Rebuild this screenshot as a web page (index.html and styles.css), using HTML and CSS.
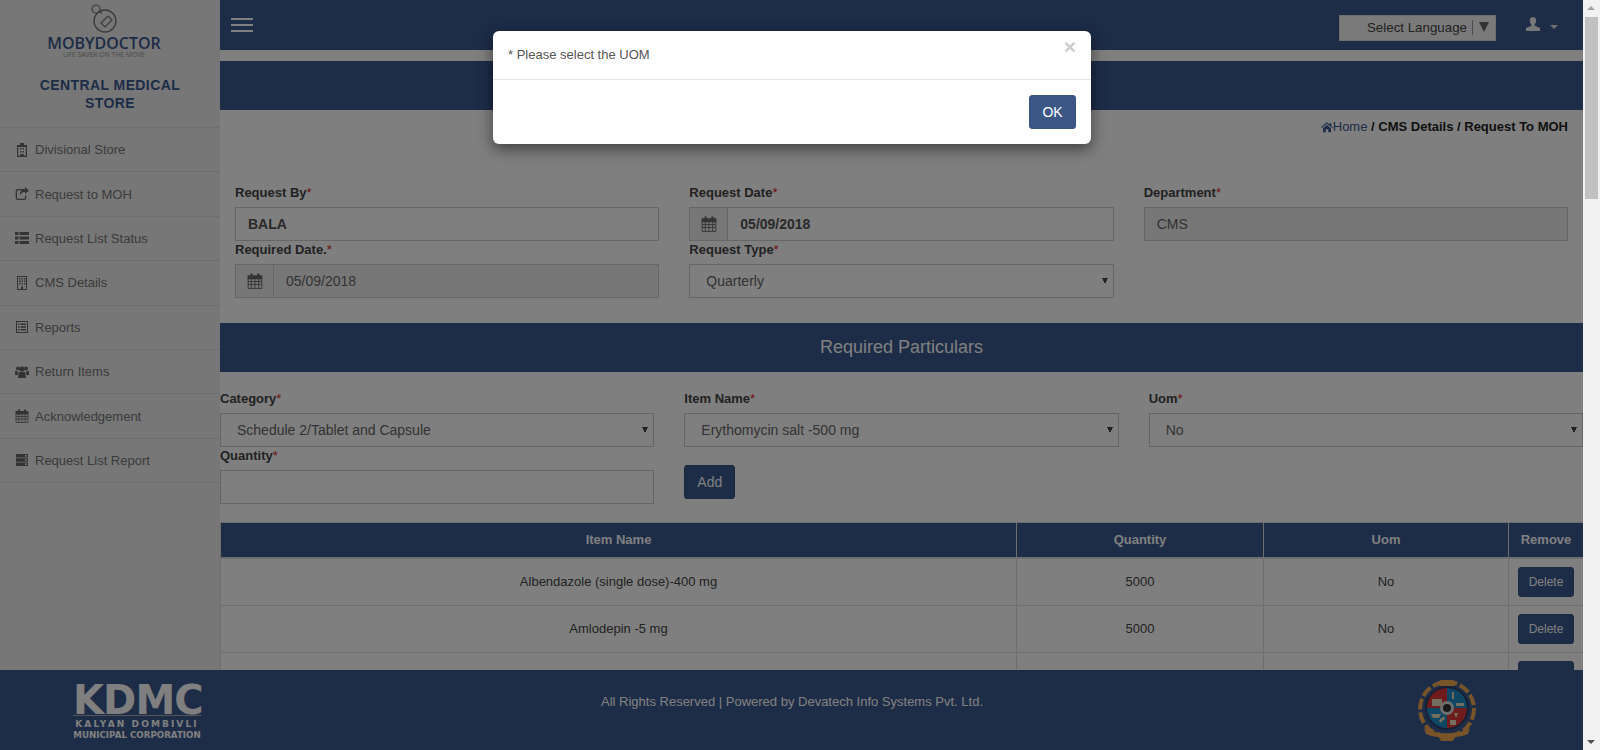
FILE: index.html
```html
<!DOCTYPE html>
<html lang="en">
<head>
    <meta charset="UTF-8">
    <title>Request To MOH</title>
    <link rel="stylesheet" href="styles.css">
</head>
<body>
    <svg class="sprite" width="0" height="0">
        <symbol id="i-cal" viewBox="0 0 14 14"><path d="M3 .500h2V3H3zM9 .500h2V3H9zM.500 2h13v3.500H.500z"/><path d="M1 5v8.500h12V5M1 7.500h12M1 10h12M3.800 5v8.500M7 5v8.500M10.200 5v8.500" fill="none" stroke="currentColor" stroke-width=".8"/></symbol>
        <symbol id="i-hosp" viewBox="0 0 14 14"><path d="M5 0h4v2h3v12H2V2h3zM3.200 4v8.800h2V11h3.600v1.800h2V4zM5 5h1.500v1.500H5zm2.500 0H9v1.500H7.500zM5 8h1.500v1.500H5zm2.500 0H9v1.500H7.500z" fill-rule="evenodd"/></symbol>
        <symbol id="i-share" viewBox="0 0 14 14"><path d="M3 2h6v1.300H3a1 1 0 0 0-1 1v6.400a1 1 0 0 0 1 1h6a1 1 0 0 0 1-1V9l1.300-1v3a2 2 0 0 1-2 2H2.700a2 2 0 0 1-2-2V4a2 2 0 0 1 2-2zM10 0l4 3.500L10 7V5C7 5 5.500 6 5 9 4.500 5 6 2.500 10 2z"/></symbol>
        <symbol id="i-list" viewBox="0 0 14 14"><path d="M0 1h3.500v3H0zm4.500 0H14v3H4.500zM0 5.500h3.500v3H0zm4.500 0H14v3H4.500zM0 10h3.500v3H0zm4.500 0H14v3H4.500z"/></symbol>
        <symbol id="i-build" viewBox="0 0 14 14"><path d="M2 0h10v14H2zm1 1v12h3v-2.500h2V13h3V1zm1 1h1.500v1.500H4zm2.500 0H8v1.500H6.500zM9 2h1.500v1.500H9zM4 4.500h1.500V6H4zm2.500 0H8V6H6.500zm2.500 0h1.500V6H9zM4 7h1.500v1.500H4zm2.500 0H8v1.500H6.500zM9 7h1.500v1.500H9z" fill-rule="evenodd"/></symbol>
        <symbol id="i-report" viewBox="0 0 14 14"><path d="M1 1h12v12H1zm1 1v10h10V2zm1 1.500h1.500V5H3zm2.500 0H11V5H5.500zM3 6.200h1.500v1.500H3zm2.500 0H11v1.500H5.500zM3 9h1.500v1.500H3zm2.500 0H11v1.500H5.500z" fill-rule="evenodd"/></symbol>
        <symbol id="i-users" viewBox="0 0 14 14"><circle cx="3" cy="3.500" r="1.900"/><circle cx="11" cy="3.500" r="1.900"/><circle cx="7" cy="4" r="2.600"/><path d="M0 6h2.500L3 10H0zm14 0h-2.500L11 10h3zM3.800 7h6.400l.8 6H3z"/></symbol>
        <symbol id="i-server" viewBox="0 0 14 14"><path d="M1 1h12v3.500H1zm0 4.200h12v3.600H1zm0 4.300h12V13H1zM10 2v1.500h2V2zm0 4.300v1.500h2V6.300zm0 4.200V12h2v-1.500z" fill-rule="evenodd"/></symbol>
        <symbol id="i-home" viewBox="0 0 14 14"><path d="M7 1.500l3 2.500V2.500h2v3.200L14 7.400l-.8.900L7 3.200.8 8.300 0 7.400zM2.300 8.500L7 4.700l4.700 3.800V13H8.500V9.700h-3V13H2.300z"/></symbol>
        <symbol id="i-user" viewBox="0 0 14 14"><path d="M7 0c2 0 3.200 1.500 3.200 3.500 0 1.500-.6 3-1.500 3.800v1.400L14 11v3H0v-3l5.300-2.300V7.300C4.400 6.500 3.800 5 3.800 3.500 3.800 1.500 5 0 7 0z"/></symbol>
    </svg>

    <div class="page">
        <div class="app">
            <aside class="sidebar">
                <div class="brand">
                    <svg class="brand-mark" viewBox="0 0 28 30" width="28" height="30">
                        <circle cx="15" cy="18" r="11" fill="none" stroke="#777" stroke-width="1.300"/>
                        <circle cx="6" cy="6" r="4" fill="none" stroke="#777" stroke-width="1.200"/>
                        <path d="M9.500 8.500c1 1 1.500 1.500 2.500 2" fill="none" stroke="#777" stroke-width="1.200"/>
                        <path d="M11 20l7-7 4 4-7 7z" fill="none" stroke="#777" stroke-width="1.200"/>
                    </svg>
                    <div class="brand-name">MOBYDOCTOR</div>
                    <div class="brand-tag">LIFE SAVER ON THE MOVE</div>
                </div>
                <div class="store-name">CENTRAL MEDICAL<br>STORE</div>
                <ul class="side-menu">
                    <li><svg class="icon"><use href="#i-hosp"/></svg>Divisional Store</li>
                    <li><svg class="icon"><use href="#i-share"/></svg>Request to MOH</li>
                    <li><svg class="icon"><use href="#i-list"/></svg>Request List Status</li>
                    <li><svg class="icon"><use href="#i-build"/></svg>CMS Details</li>
                    <li><svg class="icon"><use href="#i-report"/></svg>Reports</li>
                    <li><svg class="icon"><use href="#i-users"/></svg>Return Items</li>
                    <li><svg class="icon"><use href="#i-cal"/></svg>Acknowledgement</li>
                    <li><svg class="icon"><use href="#i-server"/></svg>Request List Report</li>
                </ul>
            </aside>

            <main class="main">
                <header class="topbar">
                    <div class="burger"><span></span><span></span><span></span></div>
                    <div class="topbar-right">
                        <div class="lang">
                            <span>Select Language</span>
                            <i class="lang-sep"></i>
                            <b class="lang-arrow"></b>
                        </div>
                        <div class="user">
                            <svg class="user-icon"><use href="#i-user"/></svg>
                            <b class="caret"></b>
                        </div>
                    </div>
                </header>

                <div class="band band-top"></div>

                <div class="crumbs">
                    <svg class="home-icon"><use href="#i-home"/></svg><a href="#">Home</a> / CMS Details / Request To MOH
                </div>

                <form class="form-top">
                    <div class="field">
                        <label>Request By<em>*</em></label>
                        <input class="control strong" type="text" value="BALA">
                    </div>
                    <div class="field">
                        <label>Request Date<em>*</em></label>
                        <div class="input-group">
                            <span class="addon"><svg class="icon-cal"><use href="#i-cal"/></svg></span>
                            <input class="control strong" type="text" value="05/09/2018">
                        </div>
                    </div>
                    <div class="field">
                        <label>Department<em>*</em></label>
                        <input class="control" type="text" value="CMS" disabled>
                    </div>
                    <div class="field">
                        <label>Required Date.<em>*</em></label>
                        <div class="input-group">
                            <span class="addon"><svg class="icon-cal"><use href="#i-cal"/></svg></span>
                            <input class="control" type="text" value="05/09/2018" disabled>
                        </div>
                    </div>
                    <div class="field">
                        <label>Request Type<em>*</em></label>
                        <select class="control"><option>Quarterly</option></select>
                    </div>
                </form>

                <div class="band band-title">Required Particulars</div>

                <form class="form-items">
                    <div class="field">
                        <label>Category<em>*</em></label>
                        <select class="control"><option>Schedule 2/Tablet and Capsule</option></select>
                    </div>
                    <div class="field">
                        <label>Item Name<em>*</em></label>
                        <select class="control"><option>Erythomycin salt -500 mg</option></select>
                    </div>
                    <div class="field">
                        <label>Uom<em>*</em></label>
                        <select class="control"><option>No</option></select>
                    </div>
                    <div class="field">
                        <label>Quantity<em>*</em></label>
                        <input class="control" type="text">
                    </div>
                    <div class="field field-btn">
                        <button class="btn" type="button">Add</button>
                    </div>
                </form>

                <table class="items">
                    <colgroup>
                        <col class="col-name"><col class="col-qty"><col class="col-uom"><col class="col-del">
                    </colgroup>
                    <thead>
                        <tr><th>Item Name</th><th>Quantity</th><th>Uom</th><th>Remove</th></tr>
                    </thead>
                    <tbody>
                        <tr>
                            <td>Albendazole (single dose)-400 mg</td><td>5000</td><td>No</td>
                            <td><button class="btn btn-sm" type="button">Delete</button></td>
                        </tr>
                        <tr>
                            <td>Amlodepin -5 mg</td><td>5000</td><td>No</td>
                            <td><button class="btn btn-sm" type="button">Delete</button></td>
                        </tr>
                        <tr>
                            <td>Atenolol -50 mg</td><td>5000</td><td>No</td>
                            <td><button class="btn btn-sm" type="button">Delete</button></td>
                        </tr>
                    </tbody>
                </table>
            </main>

            <footer class="footer">
                <div class="kdmc">
                    <div class="kdmc-big">KDMC</div>
                    <div class="kdmc-line">KALYAN DOMBIVLI</div>
                    <div class="kdmc-sub">MUNICIPAL CORPORATION</div>
                </div>
                <div class="footer-text">All Rights Reserved | Powered by Devatech Info Systems Pvt. Ltd.</div>
                <svg class="emblem" viewBox="0 0 62 64" width="62" height="64">
                    <circle cx="31" cy="30" r="27" fill="none" stroke="#f0a850" stroke-width="4" stroke-dasharray="11 3"/>
                    <path d="M21 3l4-2h12l4 2-3 4H24z" fill="#f0a850"/>
                    <path d="M8 49c12 7 34 7 46 0l-2 6c-12 5-30 5-42 0zM22 57h18l-3 5H25z" fill="#f0a850"/>
                    <circle cx="31" cy="29" r="22" fill="#2a3f66"/>
                    <path d="M31 9a20 20 0 0 0-20 20h20z" fill="#e03636"/>
                    <path d="M31 9a20 20 0 0 1 20 20H31z" fill="#1c8cc8"/>
                    <path d="M11 29a20 20 0 0 0 20 20V29z" fill="#1c8cc8"/>
                    <path d="M51 29a20 20 0 0 1-20 20V29z" fill="#e03636"/>
                    <path d="M16 20h10v7H16zM36 13h2v7h-2zM40 24h8v3h-8zM38 34h4l-2 5zM15 35h10l-2 4h-6zM34 41h6v5h-6zM23 41l5-4 1 3-5 4z" fill="#e8dcc0"/>
                    <circle cx="31" cy="29" r="7" fill="#ddd"/>
                    <circle cx="31" cy="29" r="4" fill="#333"/>
                </svg>
            </footer>

            <div class="backdrop"></div>

            <div class="modal">
                <div class="modal-head">
                    <span class="modal-msg">* Please select the UOM</span>
                    <span class="modal-close">&times;</span>
                </div>
                <div class="modal-foot">
                    <button class="btn btn-ok" type="button">OK</button>
                </div>
            </div>
        </div>

        <div class="scrollbar">
            <b class="arrow-up"></b>
            <div class="thumb"></div>
            <b class="arrow-down"></b>
        </div>
    </div>
</body>
</html>
```

FILE: styles.css
```css
* {
    box-sizing: border-box;
}
html, body {
    margin: 0;
    padding: 0;
    height: 100%;
    overflow: hidden;
}
body {
    font-family: "Liberation Sans", Arial, sans-serif;
    font-size: 13px;
    color: #444;
    background: #fff;
}
.sprite {
    position: absolute;
}
.page {
    display: flex;
    height: 750px;
}
.app {
    position: relative;
    display: flex;
    flex: 1;
    min-width: 0;
    overflow: hidden;
}

/* sidebar */
.sidebar {
    flex: 0 0 220px;
    background: #eee;
}
.brand {
    display: flex;
    flex-direction: column;
    align-items: center;
    height: 59px;
    padding: 3px 12px 0 0;
}
.brand-mark {
    flex: none;
}
.brand-name {
    margin-top: 2px;
    font-family: "Open Sans", sans-serif;
    font-size: 16px;
    font-weight: 600;
    line-height: 16px;
    color: #3b598f;
}
.brand-tag {
    font-family: "Open Sans", sans-serif;
    font-size: 6.800px;
    line-height: 8px;
    color: #999;
}
.store-name {
    height: 68px;
    padding-top: 17px;
    font-size: 14px;
    line-height: 18px;
    font-weight: bold;
    letter-spacing: .4px;
    text-align: center;
    color: #3b598f;
}
.side-menu {
    list-style: none;
    margin: 0;
    padding: 0;
    border-top: 1px solid #ddd;
}
.side-menu li {
    display: flex;
    align-items: center;
    height: 44.400px;
    padding-left: 15px;
    color: #777;
    border-bottom: 1px solid #ddd;
    font-size: 13px;
}
.icon {
    width: 14px;
    height: 14px;
    margin-right: 6px;
    fill: #666;
    color: #666;
}

/* main area */
.main {
    flex: 1;
    min-width: 0;
}
.topbar {
    display: flex;
    justify-content: space-between;
    align-items: flex-start;
    height: 50px;
    background: #3b598f;
}
.burger {
    width: 22px;
    margin: 18px 0 0 11px;
}
.burger span {
    display: block;
    height: 2px;
    margin-bottom: 4px;
    background: #fff;
}
.topbar-right {
    display: flex;
}
.lang {
    display: flex;
    align-items: center;
    justify-content: flex-end;
    width: 157px;
    height: 26px;
    margin-top: 15px;
    padding: 0 6px 2px 0;
    background: #f5f5f5;
    border: 1px solid #ddd;
    font-size: 13.330px;
    color: #444;
}
.lang-sep {
    width: 1px;
    height: 15px;
    margin: 0 6px 0 5px;
    background: #999;
}
.lang-arrow {
    border-left: 5px solid transparent;
    border-right: 5px solid transparent;
    border-top: 10px solid #666;
}
.user {
    display: flex;
    width: 87px;
    padding: 17px 0 0 30px;
}
.user-icon {
    width: 14px;
    height: 14px;
    fill: #eee;
}
.caret {
    width: 0;
    height: 0;
    margin: 8px 0 0 10px;
    border-left: 4px solid transparent;
    border-right: 4px solid transparent;
    border-top: 4px solid #ddd;
}
.band {
    height: 49px;
    background: #3b598f;
    text-align: center;
    font-size: 18px;
    line-height: 49px;
    color: #fff;
}
.band-top {
    margin-top: 11px;
}
.crumbs {
    height: 74px;
    padding: 9px 15px 0 0;
    text-align: right;
    font-weight: bold;
    line-height: 16px;
    color: #222;
}
.crumbs a {
    font-weight: normal;
    color: #3b598f;
    text-decoration: none;
}
.home-icon {
    width: 12px;
    height: 12px;
    vertical-align: -2px;
    fill: #3b598f;
}

/* forms */
.form-top, .form-items {
    display: grid;
    grid-template-columns: repeat(3, 1fr);
    align-content: start;
}
.form-top {
    height: 139px;
}
.form-items {
    margin: 18px -15px 0;
    height: 132px;
}
.field {
    padding: 0 15px;
}
.field label {
    display: block;
    height: 18px;
    margin-bottom: 5px;
    font-weight: bold;
    line-height: 18px;
}
.field em {
    font-style: normal;
    font-weight: normal;
    color: #e02020;
}
.field-btn {
    padding-top: 18px;
}
.control {
    display: block;
    width: 100%;
    height: 34px;
    padding: 6px 12px;
    border: 1px solid #ccc;
    border-radius: 0;
    background-color: #fff;
    font-family: inherit;
    font-size: 14px;
    color: #666;
}
select.control {
    appearance: none;
    padding-left: 16px;
    background-image: linear-gradient(to top right, transparent 50%, #444 50%), linear-gradient(to top left, transparent 50%, #444 50%);
    background-size: 3px 6px, 3px 6px;
    background-position: right 8px center, right 5px center;
    background-repeat: no-repeat;
}
.control:disabled {
    background-color: #eee;
    opacity: 1;
}
.strong {
    font-weight: bold;
    color: #555;
}
.input-group {
    display: flex;
}
.addon {
    display: flex;
    align-items: center;
    justify-content: center;
    flex: 0 0 38px;
    height: 34px;
    background: #eee;
    border: 1px solid #ccc;
    border-right: 0;
}
.icon-cal {
    width: 16px;
    height: 16px;
    fill: #666;
    color: #666;
}
.btn {
    height: 34px;
    padding: 6px 12px;
    border: 1px solid #37537f;
    border-radius: 3px;
    background: #3b598f;
    font-family: inherit;
    font-size: 14px;
    color: #fff;
}
.btn-ok {
    width: 47px;
    padding: 6px 0;
    background: #3c5685;
}
.btn-sm {
    height: 30px;
    padding: 5px 10px;
    font-size: 12px;
}

/* table */
.items {
    width: 100%;
    table-layout: fixed;
    border-collapse: collapse;
}
.col-name {
    width: 796px;
}
.col-qty {
    width: 247px;
}
.col-uom {
    width: 245px;
}
.col-del {
    width: 75px;
}
.items th {
    height: 35px;
    padding: 0;
    background: #3b598f;
    border: 1px solid #ddd;
    border-bottom-width: 2px;
    color: #fff;
    font-size: 13px;
}
.items td {
    padding: 8px;
    border: 1px solid #ddd;
    text-align: center;
    font-size: 13px;
}

/* footer */
.footer {
    position: absolute;
    left: 0;
    right: 0;
    bottom: 0;
    display: flex;
    height: 80px;
    background: #3b598f;
    color: #fff;
}
.kdmc {
    width: 128px;
    height: 56px;
    margin: 14px 0 0 73px;
    text-align: center;
    font-family: "DejaVu Sans", sans-serif;
    font-weight: bold;
}
.kdmc-big {
    height: 32px;
    border-bottom: 1px solid #aaa;
    font-size: 40px;
    line-height: 32px;
    letter-spacing: -.9px;
    white-space: nowrap;
}
.kdmc-line {
    margin-top: 3px;
    font-size: 9px;
    line-height: 11px;
    letter-spacing: 2.100px;
    white-space: nowrap;
}
.kdmc-sub {
    font-size: 8.700px;
    line-height: 10px;
    white-space: nowrap;
}
.footer-text {
    width: 660px;
    margin-left: 261px;
    padding-top: 25px;
    font-size: 13px;
    line-height: 14px;
    text-align: center;
    white-space: nowrap;
}
.emblem {
    margin: 9px 0 0 294px;
}

/* alert */
.backdrop {
    position: absolute;
    inset: 0;
    background: rgba(0, 0, 0, .5);
}
.modal {
    position: absolute;
    left: 493px;
    top: 31px;
    width: 598px;
    height: 113px;
    background: #fff;
    border-radius: 6px;
    box-shadow: 0 5px 15px rgba(0, 0, 0, .5);
}
.modal-head {
    position: relative;
    height: 49px;
    padding: 16px 15px 0;
    border-bottom: 1px solid #e5e5e5;
    font-size: 13px;
    line-height: 15px;
    color: #555;
}
.modal-close {
    position: absolute;
    right: 15px;
    top: 4px;
    font-size: 21px;
    line-height: 24px;
    font-weight: bold;
    color: #ccc;
}
.modal-foot {
    display: flex;
    justify-content: flex-end;
    padding: 15px;
}

/* page scrollbar */
.scrollbar {
    position: relative;
    flex: 0 0 17px;
    background: #f1f1f1;
}
.thumb {
    position: absolute;
    left: 2px;
    top: 17px;
    width: 13px;
    height: 182px;
    background: #c1c1c1;
}
.arrow-up, .arrow-down {
    position: absolute;
    left: 4px;
    border-left: 4px solid transparent;
    border-right: 4px solid transparent;
}
.arrow-up {
    top: 6px;
    border-bottom: 4px solid #a3a3a3;
}
.arrow-down {
    bottom: 6px;
    border-top: 4px solid #505050;
}
```
